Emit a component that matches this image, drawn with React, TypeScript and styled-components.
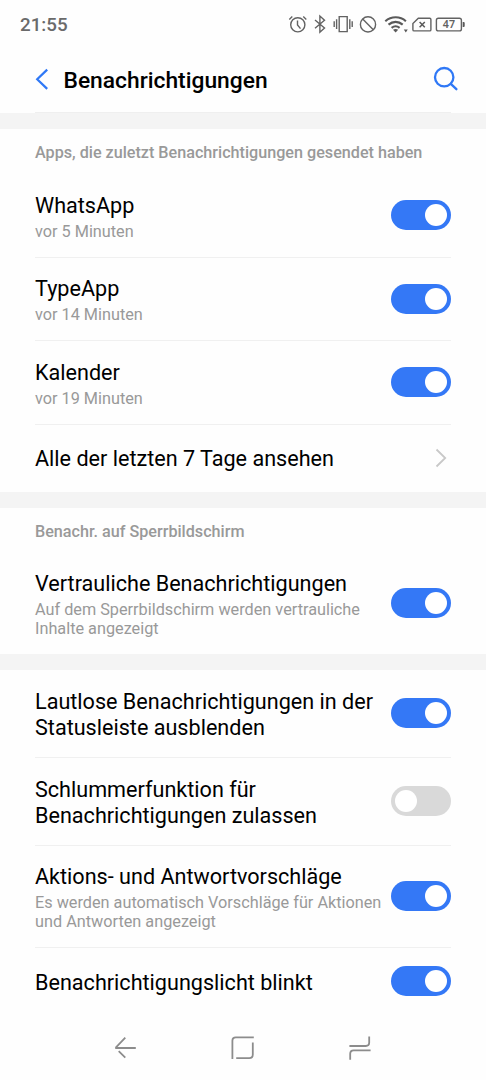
import styled, { createGlobalStyle } from "styled-components";

interface SettingProps {
  title: string;
  detail?: string;
  height: number;
  on?: boolean;
  link?: boolean;
}
interface SectionProps {
  caption?: string;
  settings: SettingProps[];
}

const sections: SectionProps[] = [
  {
    caption: "Apps, die zuletzt Benachrichtigungen gesendet haben",
    settings: [
      { title: "WhatsApp", detail: "vor 5 Minuten", height: 84, on: true },
      { title: "TypeApp", detail: "vor 14 Minuten", height: 83.4, on: true },
      { title: "Kalender", detail: "vor 19 Minuten", height: 83.6, on: true },
      { title: "Alle der letzten 7 Tage ansehen", height: 67, link: true },
    ],
  },
  {
    caption: "Benachr. auf Sperrbildschirm",
    settings: [
      {
        title: "Vertrauliche Benachrichtigungen",
        detail: "Auf dem Sperrbildschirm werden vertrauliche Inhalte angezeigt",
        height: 101,
        on: true,
      },
    ],
  },
  {
    settings: [
      {
        title: "Lautlose Benachrichtigungen in der Statusleiste ausblenden",
        height: 88.5,
        on: true,
      },
      {
        title: "Schlummerfunktion für Benachrichtigungen zulassen",
        height: 87.5,
      },
      {
        title: "Aktions- und Antwortvorschläge",
        detail:
          "Es werden automatisch Vorschläge für Aktionen und Antworten angezeigt",
        height: 102.5,
        on: true,
      },
      { title: "Benachrichtigungslicht blinkt", height: 66.5, on: true },
    ],
  },
];

const StatusIcons = () => (
  <StatusSvg viewBox="0 0 178 24" aria-hidden="true">
    <g className="line">
      <circle cx="9.8" cy="12.8" r="7.1" />
      <path d="M9.5 8.4v4.6l3 3.6M1.3 7.4l3-2.8M15.3 4.6l3 2.8" />
      <path d="M27 8l9.5 8-4.6 4.2V4l4.6 4.2-9.5 8" />
      <path d="M51.2 4.6h8v15h-8zM48.6 7.2v9.8M46.2 9.2v5.8M61.8 7.2v9.8M64.2 9.2v5.8" />
      <circle cx="80" cy="12.4" r="7.6" />
      <path d="M74.7 7l10.6 10.8" />
    </g>
    <g className="wifi">
      <path d="M97.3 9.2c6-5.2 14.8-5.2 20.6 0M100.5 12.6c4.3-3.7 10-3.7 14.2 0M103.6 15.9c2.6-2.1 5.5-2.1 8 0" />
    </g>
    <path className="fill" d="M105 17.8q2.6-1.8 5.2 0l-2.6 2.8zM115.8 17.6h4l-2 2.8z" />
    <g className="line">
      <path d="M130.3 6.2h11.4q1.2 0 1.2 1.2v10.3q0 1.2-1.2 1.2h-15.6q-1.2 0-1.2-1.2v-6.2z" />
      <rect x="148.4" y="6.2" width="25" height="12.7" rx="2" />
    </g>
    <path className="cross" d="M131.6 9.9l5.2 5.4M136.8 9.9l-5.2 5.4" />
    <path className="fill" d="M174.7 10.1h1q1 0 1 1v2.9q0 1-1 1h-1z" />
    <text x="160.9" y="16.4" textAnchor="middle">
      47
    </text>
  </StatusSvg>
);

const Setting = ({ title, detail, height, on, link }: SettingProps) => (
  <Row $height={height} $link={link}>
    <RowText>
      <RowTitle>{title}</RowTitle>
      {detail && <RowDetail>{detail}</RowDetail>}
    </RowText>
    {link ? (
      <Chevron viewBox="0 0 12 20" aria-hidden="true">
        <path d="M1.5 1.5l8.7 8.5-8.7 8.5" />
      </Chevron>
    ) : (
      <Switch role="switch" aria-checked={!!on} aria-label={title} $on={!!on}>
        <Knob />
      </Switch>
    )}
  </Row>
);

const App = () => {
  return (
    <Screen>
      <GlobalStyle />
      <StatusBar>
        <Clock>21:55</Clock>
        <StatusIcons />
      </StatusBar>
      <Header>
        <BackIcon viewBox="0 0 14 22" aria-hidden="true">
          <path d="M12.2 1.6L2.2 11.3l10 9.6" />
        </BackIcon>
        <Title>Benachrichtigungen</Title>
        <SearchIcon viewBox="0 0 26 26" aria-hidden="true">
          <circle cx="11.2" cy="11.2" r="9.2" />
          <path d="M17.8 17.8l5.6 5.4" />
        </SearchIcon>
      </Header>
      {sections.map(({ caption, settings }, idx) => (
        <Section key={`section_${idx}`}>
          {caption && <Caption>{caption}</Caption>}
          {settings.map((setting) => (
            <Setting key={setting.title} {...setting} />
          ))}
        </Section>
      ))}
      <NavBar>
        <NavIcon viewBox="0 0 26 26" aria-hidden="true">
          <path d="M12.3 2.6L2.5 12.8M2.2 13h20.6M5.7 16.2l6.6 6.4" />
        </NavIcon>
        <NavIcon viewBox="0 0 26 26" aria-hidden="true">
          <path d="M2.4 24V5.8q0-3.4 3.4-3.4h18M22.8 7.4v12.2q0 3.6-3.6 3.6H6.2" />
        </NavIcon>
        <NavIcon viewBox="0 0 26 26" aria-hidden="true">
          <path d="M22.2 1.4v6.2q0 3.4-3.4 3.4H2.4M3.2 24.8v-6q0-3.4 3.4-3.4h17" />
        </NavIcon>
      </NavBar>
    </Screen>
  );
};
export default App;

const GlobalStyle = createGlobalStyle`
  * {
    box-sizing: border-box;
  }
  body {
    margin: 0;
    background: #fefefe;
    font-family: Roboto, "Liberation Sans", sans-serif;
  }
`;
const Screen = styled.div`
  display: flex;
  flex-direction: column;
  width: 486px;
  height: 1080px;
  overflow: hidden;
  color: #000;
  background: #fefefe;
  > * {
    flex-shrink: 0;
  }
`;
const StatusBar = styled.div`
  display: flex;
  align-items: center;
  justify-content: space-between;
  height: 48px;
  padding: 2px 20px 0;
`;
const Clock = styled.div`
  font-size: 18.8px;
  font-weight: 500;
  color: #6a6a6a;
`;
const StatusSvg = styled.svg`
  width: 178px;
  height: 24px;
  margin: -2px 0 0;
  .line {
    fill: none;
    stroke: #626262;
    stroke-width: 1.4;
  }
  .wifi {
    fill: none;
    stroke: #5a5a5a;
    stroke-width: 2.1;
  }
  .cross {
    stroke: #5a5a5a;
    stroke-width: 1.5;
  }
  .fill {
    fill: #5a5a5a;
  }
  text {
    font-family: "Noto Sans", Roboto, sans-serif;
    font-size: 10.6px;
    font-weight: 600;
    fill: #626262;
  }
`;
const Header = styled.header`
  display: flex;
  align-items: center;
  height: 65px;
  margin: 0 35px;
  padding-bottom: 2px;
  border-bottom: 1px solid #efefef;
`;
const BackIcon = styled.svg`
  width: 14px;
  height: 22px;
  fill: none;
  stroke: #2f78f6;
  stroke-width: 2.2;
`;
const Title = styled.h1`
  flex: 1;
  margin: 3px 0 0 14.5px;
  font-size: 22.8px;
  font-weight: 500;
  line-height: 30px;
`;
const SearchIcon = styled.svg`
  width: 26px;
  height: 26px;
  margin-right: -8px;
  fill: none;
  stroke: #2f78f6;
  stroke-width: 2.3;
  stroke-linecap: round;
`;
const Section = styled.section`
  padding: 0 35px;
  border-top: 16px solid #f4f4f4;
`;
const Caption = styled.h2`
  height: 45px;
  margin: 0;
  font-size: 16.17px;
  font-weight: 500;
  line-height: 47px;
  color: #999;
  white-space: nowrap;
`;
const Row = styled.div<{ $height: number; $link?: boolean }>`
  display: flex;
  align-items: center;
  justify-content: space-between;
  height: ${({ $height }) => $height}px;
  padding-bottom: ${({ $link }) => ($link ? "1.5px" : 0)};
  border-bottom: 1px solid #f0f0f0;
  &:last-child {
    border-bottom: 0;
  }
`;
const RowText = styled.div`
  width: 350px;
  padding-top: 2.5px;
`;
const RowTitle = styled.div`
  font-size: 21.6px;
  line-height: 26px;
`;
const RowDetail = styled.div`
  margin-top: 3px;
  font-size: 16.25px;
  line-height: 19px;
  color: #999;
`;
const Chevron = styled.svg`
  width: 12px;
  height: 20px;
  margin-right: 4px;
  fill: none;
  stroke: #c8c8c8;
  stroke-width: 1.8;
`;
const Switch = styled.div<{ $on: boolean }>`
  display: flex;
  flex: none;
  align-items: center;
  justify-content: ${({ $on }) => ($on ? "flex-end" : "flex-start")};
  width: 60px;
  height: 30px;
  margin-bottom: 0.6px;
  padding: 0 4px;
  border-radius: 15px;
  background: ${({ $on }) => ($on ? "#3478f6" : "#d9d9d9")};
`;
const Knob = styled.div`
  width: 22px;
  height: 22px;
  border-radius: 50%;
  background: #fff;
`;
const NavBar = styled.nav`
  display: flex;
  align-items: center;
  justify-content: space-between;
  height: 65px;
  padding: 1px 113px 0;
`;
const NavIcon = styled.svg`
  width: 26px;
  height: 26px;
  fill: none;
  stroke: #8c8c8c;
  stroke-width: 1.8;
`;
